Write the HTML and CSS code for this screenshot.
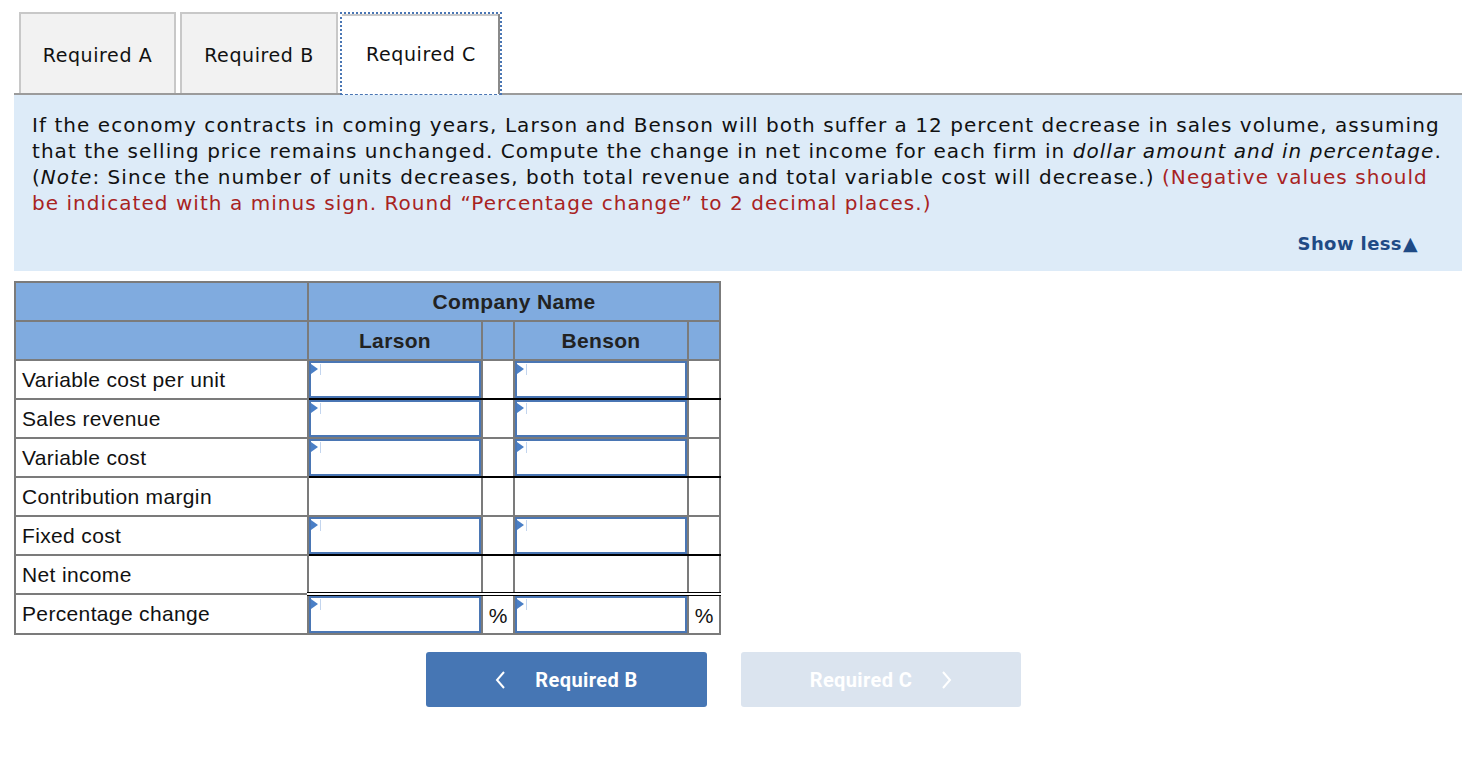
FILE: index.html
```html
<!DOCTYPE html>
<html>
<head>
<meta charset="utf-8">
<link rel="stylesheet" href="styles.css">
</head>
<body>
<div class="page">
  <div class="tabs">
    <div class="tab">Required A</div>
    <div class="tab">Required B</div>
    <div class="tab active">Required C</div>
  </div>
  <div class="panel">
    <p class="question">If the economy contracts in coming years, Larson and Benson will both suffer a 12 percent decrease in sales volume, assuming that the selling price remains unchanged. Compute the change in net income for each firm in <i>dollar amount and in percentage</i>. (<i>Note</i>: Since the number of units decreases, both total revenue and total variable cost will decrease.) <span class="red">(Negative values should be indicated with a minus sign. Round “Percentage change” to 2 decimal places.)</span></p>
    <div class="showless">Show less<span class="tri">▲</span></div>
  </div>
  <table class="grid">
    <colgroup>
      <col class="c-label"><col class="c-val"><col class="c-gap"><col class="c-val"><col class="c-gap">
    </colgroup>
    <tr class="head">
      <th></th>
      <th colspan="4">Company Name</th>
    </tr>
    <tr class="head">
      <th></th>
      <th>Larson</th>
      <th></th>
      <th>Benson</th>
      <th></th>
    </tr>
    <tr class="line-below">
      <td class="label">Variable cost per unit</td>
      <td class="inp"><div class="box"></div></td><td></td>
      <td class="inp"><div class="box"></div></td><td></td>
    </tr>
    <tr>
      <td class="label">Sales revenue</td>
      <td class="inp"><div class="box"></div></td><td></td>
      <td class="inp"><div class="box"></div></td><td></td>
    </tr>
    <tr class="line-below">
      <td class="label">Variable cost</td>
      <td class="inp"><div class="box"></div></td><td></td>
      <td class="inp"><div class="box"></div></td><td></td>
    </tr>
    <tr>
      <td class="label">Contribution margin</td>
      <td></td><td></td><td></td><td></td>
    </tr>
    <tr class="line-below">
      <td class="label">Fixed cost</td>
      <td class="inp"><div class="box"></div></td><td></td>
      <td class="inp"><div class="box"></div></td><td></td>
    </tr>
    <tr class="double-below">
      <td class="label">Net income</td>
      <td></td><td></td><td></td><td></td>
    </tr>
    <tr>
      <td class="label">Percentage change</td>
      <td class="inp"><div class="box"></div></td><td class="pct">%</td>
      <td class="inp"><div class="box"></div></td><td class="pct">%</td>
    </tr>
  </table>
  <div class="nav">
    <div class="btn prev">
      <svg class="chev" width="12" height="20" viewBox="0 0 12 20"><path d="M9 2 L2 10 L9 18" fill="none" stroke="#fff" stroke-width="2"/></svg>
      <span>Required B</span>
    </div>
    <div class="btn next">
      <span>Required C</span>
      <svg class="chev" width="12" height="20" viewBox="0 0 12 20"><path d="M3 2 L10 10 L3 18" fill="none" stroke="#fff" stroke-width="2"/></svg>
    </div>
  </div>
</div>
</body>
</html>
```
FILE: styles.css
```css
html, body {
  margin: 0;
  padding: 0;
  background: #fff;
}
.page {
  padding: 12px 14px 0 14px;
}
.tabs {
  display: flex;
  align-items: flex-end;
  padding-left: 5px;
  border-bottom: 2px solid #9b9b9b;
  height: 81px;
}
.tab {
  box-sizing: border-box;
  height: 81px;
  width: 157px;
  margin-right: 4px;
  background: #f2f2f2;
  border: 2px solid #c8c8c8;
  border-bottom: none;
  font-family: "DejaVu Sans", Verdana, sans-serif;
  font-size: 19px;
  letter-spacing: 0.6px;
  color: #111;
  display: flex;
  align-items: center;
  justify-content: center;
  padding-top: 2px;
}
.tab:nth-child(2) {
  width: 158px;
  margin-right: 2px;
}
.tab.active {
  width: 162px;
  background: #fff;
  height: 83px;
  margin-bottom: -2px;
  border: 2px dotted #4a76b4;
  border-bottom: 1px dashed #4a76b4;
  box-shadow: inset -2px 0 0 #8a8a8a, inset 0 2px 0 #c8c8c8;
  padding-top: 0;
}
.panel {
  background: #ddebf8;
  padding: 17px 12px 14px 18px;
  height: 145px;
}
.question {
  margin: 0;
  font-family: "DejaVu Sans", Verdana, sans-serif;
  font-size: 20px;
  line-height: 26px;
  color: #111;
  letter-spacing: 1.05px;
}
.red {
  color: #a8231f;
}
.showless {
  margin-top: 16px;
  margin-right: 32px;
  text-align: right;
  font-family: "DejaVu Sans", Verdana, sans-serif;
  font-weight: bold;
  font-size: 18px;
  letter-spacing: 0.4px;
  color: #1f4a85;
}
.tri {
  font-size: 19px;
  margin-left: 1px;
}
.grid {
  margin-top: 10px;
  border-collapse: collapse;
  width: 705px;
  table-layout: fixed;
  font-family: "Liberation Sans", Arial, sans-serif;
  font-size: 21px;
  letter-spacing: 0.35px;
  color: #111;
}
.c-label { width: 293px; }
.c-val { width: 174px; }
.c-gap { width: 32px; }
.grid th, .grid td {
  border: 2px solid #7b7b7b;
  height: 39px;
  padding: 0;
  box-sizing: border-box;
}
.grid .head th {
  background: #80abdf;
  font-weight: bold;
  color: #222;
  text-align: center;
}
.grid td.label {
  padding-left: 6px;
  white-space: nowrap;
}
.grid td.inp {
  position: relative;
  padding: 0;
}
.box {
  box-sizing: border-box;
  height: 37px;
  border: 2px solid #4a76b4;
  position: relative;
  background: #fff;
}
.box::before {
  content: "";
  position: absolute;
  left: 0;
  top: 1px;
  border-left: 7px solid #4a7fc6;
  border-top: 5px solid transparent;
  border-bottom: 5px solid transparent;
}
.box::after {
  content: "";
  position: absolute;
  left: 9px;
  top: 1px;
  width: 1px;
  height: 11px;
  background: #c3d5ee;
}
.grid tr.line-below td:not(.label) {
  border-bottom: 2px solid #000;
}
.grid tr.double-below td:not(.label) {
  border-bottom: 4px double #000;
}
.grid td.pct {
  text-align: center;
  padding-top: 2px;
  letter-spacing: 0;
}
.nav {
  display: flex;
  gap: 34px;
  padding-left: 412px;
  margin-top: 17px;
}
.btn {
  width: 281px;
  height: 55px;
  border-radius: 3px;
  display: flex;
  align-items: center;
  justify-content: center;
  gap: 28px;
  font-family: Roboto, "Liberation Sans", sans-serif;
  font-weight: bold;
  font-size: 20px;
  letter-spacing: 0.4px;
  color: #fff;
}
.btn.prev {
  background: #4676b4;
}
.btn.next {
  width: 280px;
  background: #dbe4ef;
  gap: 28px;
}
.chev {
  display: block;
}
```
